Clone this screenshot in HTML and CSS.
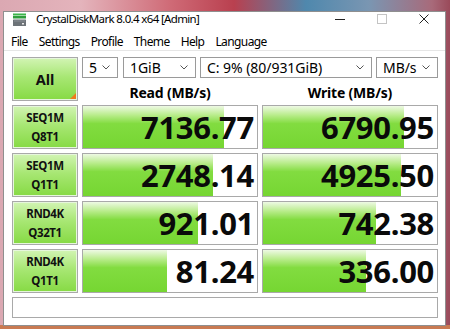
FILE: index.html
```html
<!DOCTYPE html>
<html>
<head>
<meta charset="utf-8">
<link rel="stylesheet" href="styles.css">
</head>
<body>
<div class="window">
  <div class="titlebar">
    <svg class="app-icon" width="16" height="14" viewBox="0 0 16 14">
      <rect x="1" y="0.5" width="13" height="2" fill="#3cb44a"/>
      <rect x="1" y="3" width="13" height="2.5" fill="#2e9e3c"/>
      <rect x="1" y="6.5" width="13" height="6.5" rx="0.5" fill="#6d7378"/>
      <rect x="2" y="7.5" width="11" height="1" fill="#8a9096"/>
      <rect x="10" y="10" width="2" height="1.5" fill="#e8e8e8"/>
    </svg>
    <span class="title">CrystalDiskMark 8.0.4 x64 [Admin]</span>
    <div class="controls">
      <span class="ctl"><svg width="10" height="10" viewBox="0 0 10 10"><line x1="0" y1="5.5" x2="10" y2="5.5" stroke="#222" stroke-width="1"/></svg></span>
      <span class="ctl"><svg width="10" height="10" viewBox="0 0 10 10"><rect x="0.5" y="0.5" width="9" height="9" fill="none" stroke="#c4c4c4" stroke-width="1"/></svg></span>
      <span class="ctl"><svg width="10" height="10" viewBox="0 0 10 10"><path d="M0.5 0.5 L9.5 9.5 M9.5 0.5 L0.5 9.5" stroke="#222" stroke-width="1"/></svg></span>
    </div>
  </div>
  <div class="menubar">
    <span class="menu-item">File</span>
    <span class="menu-item">Settings</span>
    <span class="menu-item">Profile</span>
    <span class="menu-item">Theme</span>
    <span class="menu-item">Help</span>
    <span class="menu-item">Language</span>
  </div>
  <div class="content">
    <div class="grid">
      <div class="btn all">All<span class="corner"></span></div>
      <div class="top-controls">
        <div class="selects">
          <div class="select s-count"><span>5</span><svg class="chev" width="8" height="5" viewBox="0 0 8 5"><path d="M0.5 0.5 L4 4 L7.5 0.5" fill="none" stroke="#555" stroke-width="1"/></svg></div>
          <div class="select s-size"><span>1GiB</span><svg class="chev" width="8" height="5" viewBox="0 0 8 5"><path d="M0.5 0.5 L4 4 L7.5 0.5" fill="none" stroke="#555" stroke-width="1"/></svg></div>
          <div class="select s-drive"><span>C: 9% (80/931GiB)</span><svg class="chev" width="8" height="5" viewBox="0 0 8 5"><path d="M0.5 0.5 L4 4 L7.5 0.5" fill="none" stroke="#555" stroke-width="1"/></svg></div>
          <div class="select s-unit"><span>MB/s</span><svg class="chev" width="8" height="5" viewBox="0 0 8 5"><path d="M0.5 0.5 L4 4 L7.5 0.5" fill="none" stroke="#555" stroke-width="1"/></svg></div>
        </div>
        <div class="headers">
          <div class="head">Read (MB/s)</div>
          <div class="head">Write (MB/s)</div>
        </div>
      </div>

      <div class="btn label">SEQ1M<br>Q8T1</div>
      <div class="meter" style="--w:141px"><span class="val">7136.77</span></div>
      <div class="meter" style="--w:141px"><span class="val">6790.95</span></div>

      <div class="btn label">SEQ1M<br>Q1T1</div>
      <div class="meter" style="--w:130px"><span class="val">2748.14</span></div>
      <div class="meter" style="--w:138px"><span class="val">4925.50</span></div>

      <div class="btn label">RND4K<br>Q32T1</div>
      <div class="meter" style="--w:115px"><span class="val">921.01</span></div>
      <div class="meter" style="--w:113px"><span class="val">742.38</span></div>

      <div class="btn label">RND4K<br>Q1T1</div>
      <div class="meter" style="--w:84px"><span class="val">81.24</span></div>
      <div class="meter" style="--w:103px"><span class="val">336.00</span></div>

      <div class="comment"></div>
    </div>
  </div>
</div>
</body>
</html>
```
FILE: styles.css
```css
html, body {
  margin: 0;
  padding: 0;
}
body {
  width: 450px;
  height: 329px;
  overflow: hidden;
  font-family: "Noto Sans", "Open Sans", sans-serif;
  color: #000;
  background:
    linear-gradient(to bottom, rgba(0,0,0,0) 325px, #c97a52 325px),
    linear-gradient(90deg, #dba8b2 0%, #e4b4bc 18%, #cf6a76 38%, #b9404f 52%, #4f88ad 68%, #7a96b2 82%, #a86a7a 96%, #9a4a5a 100%);
}
.window {
  box-sizing: border-box;
  margin: 11px 0 0 3px;
  width: 443px;
  height: 315px;
  background: #fff;
  border: 1px solid #8f8f8f;
  display: flex;
  flex-direction: column;
}
.titlebar {
  height: 21px;
  display: flex;
  align-items: flex-start;
}
.app-icon {
  margin: 1px 0 0 8px;
}
.title {
  margin: 0 0 0 8px;
  font-size: 11.5px;
  line-height: 14px;
  letter-spacing: -0.65px;
  color: #000;
}
.controls {
  margin-left: auto;
  display: flex;
}
.ctl {
  width: 42px;
  height: 14px;
  display: flex;
  align-items: center;
  justify-content: center;
}
.menubar {
  height: 17px;
  display: flex;
  align-items: center;
  gap: 11px;
  padding-left: 7px;
  border-bottom: 1px solid #e6e6e6;
  font-size: 12px;
  letter-spacing: -0.6px;
}
.content {
  flex: 1;
  padding: 6px 7px 0 8px;
}
.grid {
  display: grid;
  grid-template-columns: 66px 176px 176px;
  grid-template-rows: 44px 44px 44px 44px 44px 21px;
  gap: 4px;
}
.btn {
  box-sizing: border-box;
  border: 1px solid #a9a9a9;
  box-shadow: inset 0 0 0 1px #e6f6dc;
  background: linear-gradient(to bottom, #d2f4b4 0%, #a8e774 45%, #86da44 100%);
  display: flex;
  align-items: center;
  justify-content: center;
  text-align: center;
  font-weight: bold;
  color: #111;
}
.all {
  position: relative;
  font-size: 14.5px;
}
.corner {
  position: absolute;
  right: 1px;
  bottom: 1px;
  width: 0;
  height: 0;
  border-left: 6px solid transparent;
  border-bottom: 6px solid #f07a1e;
}
.label {
  font-size: 11.5px;
  line-height: 19px;
  letter-spacing: -0.4px;
}
.top-controls {
  grid-column: 2 / 4;
  display: flex;
  flex-direction: column;
}
.selects {
  display: flex;
  gap: 4px;
  height: 21px;
}
.select {
  box-sizing: border-box;
  height: 21px;
  border: 1px solid #9a9a9a;
  display: flex;
  align-items: center;
  justify-content: space-between;
  padding: 0 7px 0 6px;
  font-size: 14px;
  letter-spacing: -0.05px;
  background: #fff;
}
.s-count { width: 36px; }
.s-size { width: 73px; margin-left: 1px; }
.s-drive { width: 172px; }
.s-unit { width: 62px; }
.headers {
  display: grid;
  grid-template-columns: 176px 176px;
  gap: 4px;
  padding-top: 6px;
}
.head {
  text-align: center;
  font-size: 14px;
  font-weight: bold;
  line-height: 18px;
  letter-spacing: -0.2px;
}
.meter {
  box-sizing: border-box;
  border: 1px solid #a9a9a9;
  background-color: #fff;
  background-image: linear-gradient(to bottom, #eef9e4 0%, #b8ec8a 22%, #82dc40 42%, #76d632 100%);
  background-size: var(--w) 100%;
  background-repeat: no-repeat;
  display: flex;
  align-items: center;
  justify-content: flex-end;
  padding-right: 3px;
}
.val {
  font-size: 31px;
  font-weight: bold;
  line-height: 1;
  color: #0a0a0a;
  letter-spacing: -0.3px;
}
.comment {
  grid-column: 1 / 4;
  box-sizing: border-box;
  border: 1px solid #a9a9a9;
  background: #fff;
}
```
